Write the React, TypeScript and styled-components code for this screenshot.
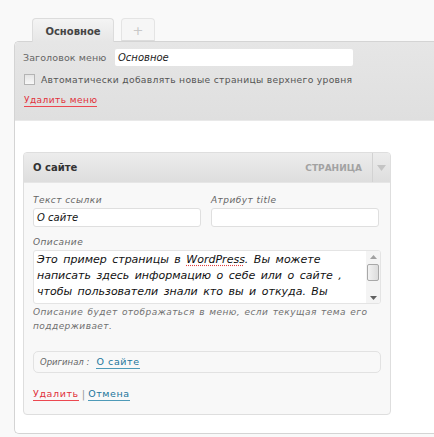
import React from 'react';
import styled, { createGlobalStyle } from 'styled-components';

const GlobalStyle = createGlobalStyle`
  html, body {
    margin: 0;
    padding: 0;
    background: #f9f9f9;
  }
  body {
    font-family: "DejaVu Sans", Verdana, sans-serif;
    color: #333;
  }
`;

const descriptionLines = [
  ['Это пример страницы в ', 'WordPress', '. Вы можете'],
  ['написать здесь информацию о себе или о сайте ,'],
  ['чтобы пользователи  знали кто вы и откуда. Вы'],
];

const App = () => {
  return (
    <Page>
      <GlobalStyle />
      <Tabs>
        <Tab active>Основное</Tab>
        <Tab>+</Tab>
      </Tabs>
      <Panel>
        <PanelHeader>
          <NameRow>
            <HeaderLabel>Заголовок меню</HeaderLabel>
            <NameInput>Основное</NameInput>
          </NameRow>
          <CheckRow>
            <Checkbox />
            <span>Автоматически добавлять новые страницы верхнего уровня</span>
          </CheckRow>
          <DeleteLink>Удалить меню</DeleteLink>
        </PanelHeader>
        <PanelBody>
          <Item>
            <ItemBar>
              <ItemTitle>О сайте</ItemTitle>
              <ItemType>СТРАНИЦА</ItemType>
              <ItemToggle>
                <svg width="9" height="6" viewBox="0 0 9 6">
                  <path d="M0 0 L9 0 L4.5 6 Z" fill="#c4c4c4" />
                </svg>
              </ItemToggle>
            </ItemBar>
            <ItemBody>
              <FieldRow>
                <Field>
                  <FieldLabel>Текст ссылки</FieldLabel>
                  <TextInput>О сайте</TextInput>
                </Field>
                <Field>
                  <FieldLabel>Атрибут title</FieldLabel>
                  <TextInput />
                </Field>
              </FieldRow>
              <FieldLabel>Описание</FieldLabel>
              <TextArea>
                <TextAreaContent>
                  {descriptionLines.map((line, i) => (
                    <TextLine key={i}>
                      {line.map((part, j) =>
                        part === 'WordPress' ? <Misspelled key={j}>{part}</Misspelled> : <span key={j}>{part}</span>
                      )}
                    </TextLine>
                  ))}
                </TextAreaContent>
                <Scrollbar>
                  <ScrollArrow>
                    <svg width="7" height="4" viewBox="0 0 7 4">
                      <path d="M0 4 L7 4 L3.5 0 Z" fill="#a0a0a0" />
                    </svg>
                  </ScrollArrow>
                  <ScrollTrack>
                    <ScrollThumb />
                  </ScrollTrack>
                  <ScrollArrow>
                    <svg width="7" height="4" viewBox="0 0 7 4">
                      <path d="M0 0 L7 0 L3.5 4 Z" fill="#606060" />
                    </svg>
                  </ScrollArrow>
                </Scrollbar>
              </TextArea>
              <HelpText>
                Описание будет отображаться в меню, если текущая тема его поддерживает.
              </HelpText>
              <OriginalBox>
                <OriginalLabel>Оригинал :</OriginalLabel>
                <BlueLink>О сайте</BlueLink>
              </OriginalBox>
              <Actions>
                <RedLink>Удалить</RedLink>
                <Divider>|</Divider>
                <BlueLink>Отмена</BlueLink>
              </Actions>
            </ItemBody>
          </Item>
        </PanelBody>
      </Panel>
    </Page>
  );
};

const Page = styled.div`
  width: 434px;
  height: 437px;
  overflow: hidden;
  padding: 18px 0 0 14px;
  box-sizing: border-box;
  background: #f9f9f9;
`;

const Tabs = styled.div`
  display: flex;
  gap: 7px;
  padding-left: 18px;
  position: relative;
  z-index: 1;
  margin-bottom: -1px;
`;

const Tab = styled.div<{ active?: boolean }>`
  box-sizing: border-box;
  height: ${({ active }) => (active ? '24px' : '23px')};
  width: ${({ active }) => (active ? '82px' : '34px')};
  display: flex;
  align-items: center;
  justify-content: center;
  border: 1px solid ${({ active }) => (active ? '#dcdcdc' : '#e4e4e4')};
  border-bottom: ${({ active }) => (active ? 'none' : '1px solid #dcdcdc')};
  border-radius: 4px 4px 0 0;
  background: ${({ active }) =>
    active ? 'linear-gradient(#f4f4f4, #e6e6e6)' : '#f6f6f6'};
  font-size: ${({ active }) => (active ? '10px' : '13px')};
  font-weight: ${({ active }) => (active ? 'bold' : 'normal')};
  color: ${({ active }) => (active ? '#454545' : '#c8c8c8')};
  padding-top: 1px;
`;

const Panel = styled.div`
  border: 1px solid #d4d4d4;
  border-right: none;
  border-radius: 5px 0 0 5px;
  background: #fff;
  height: 393px;
  box-sizing: border-box;
  overflow: hidden;
`;

const PanelHeader = styled.div`
  background: linear-gradient(#e6e6e6, #dfdfdf);
  padding: 7px 8px 0 8px;
  height: 79px;
  box-sizing: border-box;
  border-bottom: 1px solid #e9e9e9;
`;

const NameRow = styled.div`
  display: flex;
  align-items: center;
  gap: 10px;
  font-size: 9px;
`;

const HeaderLabel = styled.span`
  color: #666;
  font-size: 9.5px;
  letter-spacing: 0.1px;
  white-space: nowrap;
  flex: none;
  width: 82px;
`;

const NameInput = styled.div`
  width: 238px;
  height: 17px;
  box-sizing: border-box;
  background: #fff;
  border-radius: 2px;
  font-size: 10px;
  font-style: italic;
  color: #222;
  padding: 3px 3px 0;
`;

const CheckRow = styled.div`
  display: flex;
  align-items: center;
  gap: 6px;
  margin-top: 8px;
  margin-left: 1px;
  font-size: 9.2px;
  letter-spacing: 0.3px;
  color: #555;
`;

const Checkbox = styled.span`
  width: 9px;
  height: 9px;
  border: 1px solid #b4b4b4;
  background: linear-gradient(#e4e4e4, #f8f8f8);
  flex: none;
`;

const LinkBase = styled.span`
  display: inline-block;
  font-size: 9.5px;
  padding-bottom: 1px;
  letter-spacing: 0.6px;
`;

const RedLink = styled(LinkBase)`
  color: #e0303a;
  border-bottom: 1px solid #ec4850;
`;

const DeleteLink = styled(RedLink)`
  font-size: 9px;
  letter-spacing: 0.45px;
  margin-top: 10px;
  margin-left: 1px;
`;

const BlueLink = styled(LinkBase)`
  color: #21759b;
  border-bottom: 1px solid #4e9ab8;
`;

const PanelBody = styled.div`
  padding: 31px 0 0 8px;
`;

const Item = styled.div`
  width: 366px;
  border: 1px solid #dedede;
  border-radius: 4px;
  overflow: hidden;
  background: #f8f8f8;
`;

const ItemBar = styled.div`
  height: 29px;
  display: flex;
  align-items: center;
  background: linear-gradient(#ececec, #dedede);
  border-bottom: 1px solid #e6e6e6;
  padding-left: 9px;
`;

const ItemTitle = styled.span`
  font-size: 10px;
  font-weight: bold;
  color: #333;
  flex: 1;
`;

const ItemType = styled.span`
  font-size: 9px;
  font-weight: bold;
  color: #a2a2a2;
  margin-right: 10px;
`;

const ItemToggle = styled.span`
  width: 17px;
  height: 100%;
  border-left: 1px solid #d2d2d2;
  display: flex;
  align-items: center;
  justify-content: center;
`;

const ItemBody = styled.div`
  padding: 12px 9px 13px 9px;
`;

const FieldRow = styled.div`
  display: flex;
  gap: 10px;
  margin-bottom: 10px;
`;

const Field = styled.div`
  width: 168px;
`;

const FieldLabel = styled.div`
  font-size: 9px;
  font-style: italic;
  letter-spacing: 0.45px;
  color: #666;
  margin-bottom: 3px;
`;

const TextInput = styled.div`
  height: 19px;
  box-sizing: border-box;
  background: #fff;
  border: 1px solid #dfdfdf;
  border-radius: 3px;
  font-size: 10px;
  font-style: italic;
  color: #111;
  padding: 3px 3px 0;
`;

const TextArea = styled.div`
  display: flex;
  height: 54px;
  box-sizing: border-box;
  background: #fff;
  border: 1px solid #e4e4e4;
  border-radius: 3px;
  overflow: hidden;
`;

const TextAreaContent = styled.div`
  flex: 1;
  padding: 1px 3px;
  font-size: 11px;
  font-style: italic;
  line-height: 16px;
  color: #111;
  word-spacing: 2px;
`;

const TextLine = styled.div`
  white-space: nowrap;
`;

const Misspelled = styled.span`
  text-decoration: underline dotted #e04040;
  text-underline-offset: 2px;
`;

const Scrollbar = styled.div`
  width: 14px;
  display: flex;
  flex-direction: column;
  background: #f4f4f4;
`;

const ScrollArrow = styled.div`
  height: 11px;
  display: flex;
  align-items: center;
  justify-content: center;
`;

const ScrollTrack = styled.div`
  flex: 1;
  padding: 2px 1px 0;
`;

const ScrollThumb = styled.div`
  height: 15px;
  border: 1px solid #a8a8a8;
  border-radius: 2px;
  background: linear-gradient(90deg, #f2f2f2, #dcdcdc);
`;

const HelpText = styled.div`
  font-size: 9px;
  font-style: italic;
  color: #707070;
  line-height: 14px;
  margin-top: 1px;
  letter-spacing: 0.45px;
  word-spacing: 1px;
`;

const OriginalBox = styled.div`
  display: flex;
  align-items: center;
  gap: 7px;
  margin-top: 18px;
  height: 22px;
  box-sizing: border-box;
  border: 1px solid #e2e2e2;
  border-radius: 5px;
  padding-left: 6px;
`;

const OriginalLabel = styled.span`
  font-size: 8.5px;
  font-style: italic;
  color: #666;
`;

const Actions = styled.div`
  display: flex;
  align-items: center;
  gap: 3px;
  margin-top: 15px;
`;

const Divider = styled.span`
  font-size: 10px;
  color: #999;
`;

export default App;
